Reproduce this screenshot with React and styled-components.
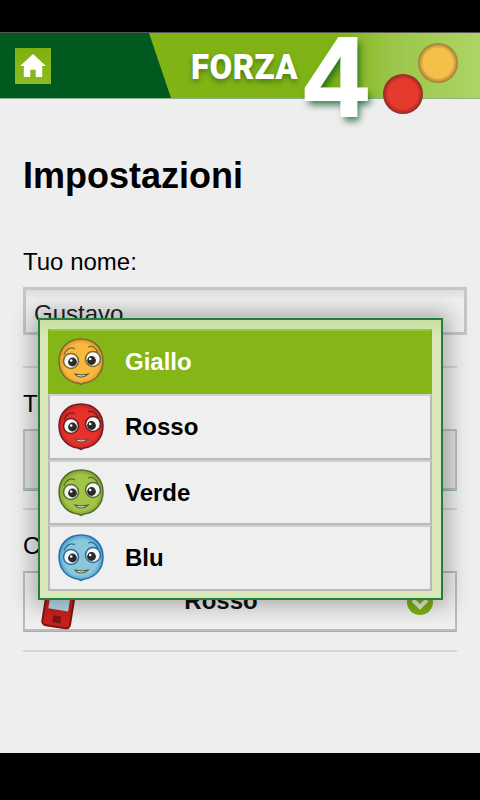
import React from "react";
import styled, { createGlobalStyle } from "styled-components";

const GlobalStyle = createGlobalStyle`
	html, body {
		margin: 0;
		padding: 0;
		background: #000;
	}
	body {
		font-family: "Liberation Sans", Arial, sans-serif;
	}
`;

const Screen = styled.div`
	position: relative;
	width: 480px;
	height: 800px;
	display: flex;
	flex-direction: column;
	overflow: hidden;
	background: #000;
`;

const StatusBar = styled.div`
	height: 33px;
	flex: none;
	background: #000;
	border-bottom: 1px solid #555;
	box-sizing: border-box;
`;

const Header = styled.header`
	position: relative;
	height: 66px;
	flex: none;
	box-sizing: border-box;
	border-bottom: 1px solid #8fb08f;
	background: linear-gradient(90deg, #85b516 0%, #7fb215 70%, #9cc64a 82%, #add465 100%);
`;

const HeaderPanel = styled.div`
	height: 100%;
	width: 171px;
	display: flex;
	align-items: center;
	padding-left: 15px;
	box-sizing: border-box;
	background: #005a20;
	clip-path: polygon(0 0, 149px 0, 171px 100%, 0 100%);
`;

const HomeButton = styled.button`
	width: 36px;
	height: 36px;
	padding: 0;
	border: 0;
	display: flex;
	align-items: center;
	justify-content: center;
	background: linear-gradient(180deg, #7fb012, #8dbb1e);
`;

const LogoWord = styled.div`
	position: absolute;
	left: 191px;
	top: 15px;
	font-family: "Roboto", sans-serif;
	font-weight: 900;
	font-size: 35px;
	line-height: 40px;
	transform: scaleX(0.94);
	transform-origin: left center;
	letter-spacing: 0.5px;
	color: #fff;
	text-shadow: 0 3px 5px rgba(20, 90, 20, 0.55);
`;

const LogoFour = styled.div`
	position: absolute;
	left: 304px;
	top: -13px;
	font-family: "Liberation Sans", sans-serif;
	font-weight: 700;
	font-size: 114px;
	line-height: 114px;
	color: #fff;
	-webkit-text-stroke: 2px #fff;
	text-shadow: 3px 5px 7px rgba(0, 90, 30, 0.75);
	clip-path: inset(14px -20px -20px -20px);
`;

const Ball = styled.div`
	position: absolute;
	left: ${props => props.$left}px;
	top: ${props => props.$top}px;
	width: 40px;
	height: 40px;
	border-radius: 50%;
	background: radial-gradient(circle closest-side, ${props => props.$color} 0%, ${props => props.$color} 74%, ${props => props.$edge} 100%);
`;

const Content = styled.main`
	flex: 1;
	background: #eee;
	padding: 57px 23px 0;
	display: flex;
	flex-direction: column;
	min-height: 0;
`;

const Title = styled.h1`
	margin: 0 0 52px;
	font-size: 36px;
	line-height: 40px;
	font-weight: 700;
	color: #000;
`;

const Label = styled.div`
	font-size: 24px;
	line-height: 28px;
	color: #000;
	margin-bottom: 11px;
`;

const NameInput = styled.div`
	width: 444px;
	height: 48px;
	box-sizing: border-box;
	border: 3px solid #c6c6c6;
	background: linear-gradient(180deg, #dcdcdc 0, #efefef 9px);
	padding: 10px 8px 0;
	font-size: 24px;
	line-height: 28px;
	color: #222;
`;

const Divider = styled.hr`
	width: 434px;
	height: 2px;
	border: 0;
	margin: ${props => props.$top}px 0 ${props => props.$bottom}px;
	background: #d4d4d4;
`;

const SelectButton = styled.div`
	position: relative;
	width: 434px;
	height: ${props => props.$height}px;
	box-sizing: border-box;
	border: 2px solid #bcbcbc;
	box-shadow: 0 1px 0 #8cc09a;
	background: ${props => props.$bg};
	display: flex;
	align-items: center;
	justify-content: center;
	padding-right: 38px;
	font-size: 24px;
	font-weight: 700;
	color: #111;
`;

const PhoneIcon = styled.svg`
	position: absolute;
	left: 15px;
	top: -2px;
`;

const ChevronIcon = styled.svg`
	position: absolute;
	right: 22px;
	top: 16px;
`;

const Dialog = styled.div`
	position: absolute;
	left: 38px;
	top: 318px;
	width: 405px;
	height: 282px;
	box-sizing: border-box;
	padding: 9px 9px 8px 8px;
	border: 2px solid #237f3e;
	background: linear-gradient(180deg, #c8dfa0 0, #d9e7ba 16px);
	box-shadow: 0 0 20px 6px rgba(0, 0, 0, 0.28);
	display: flex;
	flex-direction: column;
`;

const Option = styled.div`
	height: ${props => props.$height}px;
	flex: none;
	box-sizing: border-box;
	display: flex;
	align-items: center;
	gap: 20px;
	padding-left: 7px;
	font-size: 24px;
	font-weight: 700;
	border: 2px solid ${props => (props.$active ? "#85b516" : "#b9b9b9")};
	border-top-color: ${props => (props.$active ? "#9cc53e" : "#cfcfcf")};
	background: ${props => (props.$active ? "#85b516" : "#efefef")};
	color: ${props => (props.$active ? "#fff" : "#000")};
`;

const StatusFooter = styled.div`
	height: 47px;
	flex: none;
	background: #000;
`;

const faces = [
	{ name: "Giallo", face: "#f8b93e", rim: "#d9962f", edge: "#7f6a2e", height: 65, active: true },
	{ name: "Rosso", face: "#e8302c", rim: "#c4211f", edge: "#6a2026", height: 66 },
	{ name: "Verde", face: "#a3c447", rim: "#78a030", edge: "#55702c", height: 65 },
	{ name: "Blu", face: "#8ac8d8", rim: "#4a9ccc", edge: "#2a6ea8", height: 66 }
];

const Smiley = ({ name, face, rim, edge }) => (
	<svg width="48" height="50" viewBox="0 0 48 50">
		<defs>
			<radialGradient id={`face${name}`} cx="50%" cy="50%" r="50%">
				<stop offset="0%" stopColor={face} />
				<stop offset="78%" stopColor={face} />
				<stop offset="100%" stopColor={rim} />
			</radialGradient>
		</defs>
		<path d="M24 2 C37 2 46 11 46 24 C46 36 38 45 27 46 L24 47.5 L21 46 C10 45 2 36 2 24 C2 11 11 2 24 2 Z" fill={`url(#face${name})`} stroke={edge} strokeWidth="1.5" />
		<path d="M7 18 C9 12 14 9 18 12 M31 10 C36 8 40 12 41 16" fill="none" stroke={edge} strokeWidth="1.2" />
		<circle cx="14" cy="24" r="7.5" fill="#f6f6f6" stroke={edge} strokeWidth="1.6" />
		<circle cx="36" cy="22" r="7.5" fill="#f6f6f6" stroke={edge} strokeWidth="1.6" />
		<circle cx="15.5" cy="25" r="4.4" fill="#2a2a2a" />
		<circle cx="34.5" cy="23.5" r="4.4" fill="#2a2a2a" />
		<circle cx="14.2" cy="23.5" r="1.3" fill="#fff" />
		<circle cx="33.2" cy="22" r="1.3" fill="#fff" />
		<path d="M18 37 C21 41 27 41 31 37 C27 38 22 38 18 37 Z" fill="#eee" stroke="#5a5a4a" strokeWidth="1.2" />
	</svg>
);

const App = () => (
	<Screen>
		<GlobalStyle />
		<StatusBar />
		<Header>
			<HeaderPanel>
				<HomeButton>
					<svg width="26" height="23" viewBox="0 0 28 25">
						<path d="M14 0 L28 13 L24 13 L24 25 L17 25 L17 17 L11 17 L11 25 L4 25 L4 13 L0 13 Z" fill="#fff" />
					</svg>
				</HomeButton>
			</HeaderPanel>
			<LogoWord>FORZA</LogoWord>
			<LogoFour>4</LogoFour>
			<Ball $left={418} $top={10} $color="#f5c04a" $edge="#9e7c34" />
			<Ball $left={383} $top={41} $color="#e63a2c" $edge="#8e2b26" />
		</Header>
		<Content>
			<Title>Impostazioni</Title>
			<Label>Tuo nome:</Label>
			<NameInput>Gustavo</NameInput>
			<Divider $top={31} $bottom={22} />
			<Label>Tuo colore:</Label>
			<SelectButton $height={61} $bg="#e0e0e0" />
			<Divider $top={18} $bottom={22} />
			<Label>Colore:</Label>
			<SelectButton $height={60} $bg="#efefef">
				<PhoneIcon width="40" height="60" viewBox="0 0 40 60">
					<rect x="5" y="12" width="28" height="44" rx="4" fill="#c8211d" stroke="#7d1512" strokeWidth="2" transform="rotate(9 19 34)" />
					<rect x="9" y="16" width="20" height="23" fill="#b6dcec" transform="rotate(9 19 34)" />
					<rect x="15" y="45" width="8" height="7" fill="#7d1512" transform="rotate(9 19 34)" />
				</PhoneIcon>
				Rosso
				<ChevronIcon width="26" height="26" viewBox="0 0 26 26">
					<circle cx="13" cy="13" r="13" fill="#7fb012" />
					<path d="M6 11 L13 18 L20 11" fill="none" stroke="#e4ecd4" strokeWidth="4" />
				</ChevronIcon>
			</SelectButton>
			<Divider $top={19} $bottom={0} />
		</Content>
		<StatusFooter />
		<Dialog>
			{faces.map(item => (
				<Option key={item.name} $active={item.active} $height={item.height}>
					<Smiley name={item.name} face={item.face} rim={item.rim} edge={item.edge} />
					{item.name}
				</Option>
			))}
		</Dialog>
	</Screen>
);

export default App;
